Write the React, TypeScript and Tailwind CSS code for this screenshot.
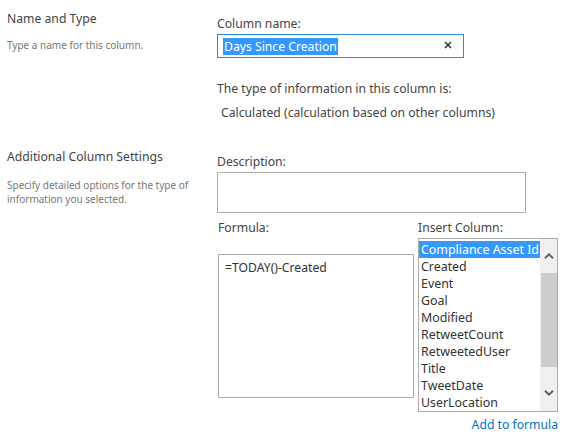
import React from "react";

const columns = [
  "Compliance Asset Id",
  "Created",
  "Event",
  "Goal",
  "Modified",
  "RetweetCount",
  "RetweetedUser",
  "Title",
  "TweetDate",
  "UserLocation",
];

function Chevron({ up }: { up?: boolean }) {
  return (
    <svg width="10" height="6" viewBox="0 0 10 6" className="block">
      <path
        d={up ? "M1 5.2 L5 1.4 L9 5.2" : "M1 0.8 L5 4.6 L9 0.8"}
        fill="none"
        stroke="#606060"
        strokeWidth="2"
      />
    </svg>
  );
}

export default function App() {
  return (
    <div
      className="w-[569px] h-[440px] bg-white text-[#444] overflow-hidden"
      style={{ fontFamily: '"Noto Sans", "Open Sans", sans-serif' }}
    >
      {/* Name and Type */}
      <div className="flex pt-[10px]">
        <div className="w-[217px] pl-[7px]">
          <h3 className="text-[12.2px] leading-[18px] text-[#444]">Name and Type</h3>
          <p className="mt-[10px] text-[10px] leading-[14px] text-[#777]">
            Type a name for this column.
          </p>
        </div>
        <div className="flex-1">
          <label className="block text-[12.2px] leading-[18px] mt-[5px]">Column name:</label>
          <div className="mt-[1px] w-[247px] h-[24px] border border-[#2a8dd4] flex items-center pl-[5px] pr-[11px]">
            <span className="bg-[#3399ff] text-white text-[12.2px] leading-[17px] px-[1px]">
              Days Since Creation
            </span>
            <span className="flex-1" />
            <svg width="8" height="8" viewBox="0 0 8 8" className="-mt-[2px]">
              <path d="M1 1 L7 7 M7 1 L1 7" stroke="#333" strokeWidth="1.6" />
            </svg>
          </div>
          <p className="mt-[22px] text-[12.2px] leading-[18px]">
            The type of information in this column is:
          </p>
          <p className="mt-[6px] pl-[4px] text-[12.2px] leading-[18px]">
            Calculated (calculation based on other columns)
          </p>
        </div>
      </div>

      {/* Additional Column Settings */}
      <div className="flex mt-[26px]">
        <div className="w-[217px] pl-[7px]">
          <h3 className="text-[12.2px] leading-[18px] text-[#444]">Additional Column Settings</h3>
          <p className="mt-[12px] w-[190px] text-[10px] leading-[14px] text-[#777]">
            Specify detailed options for the type of information you selected.
          </p>
        </div>
        <div className="flex-1">
          <label className="block text-[12.2px] leading-[18px] mt-[5px]">Description:</label>
          <div className="mt-[1px] w-[309px] h-[41px] border border-[#ababab]" />
          <div className="flex mt-[6px]">
            <div className="w-[201px]">
              <label className="block text-[12.2px] leading-[18px] pl-[1px]">Formula:</label>
              <div className="mt-[17px] ml-[1px] w-[196px] h-[144px] border border-[#ababab] px-[6px] pt-[4px] text-[12.2px] leading-[18px] text-[#333]">
                =TODAY()-Created
              </div>
            </div>
            <div>
              <label className="block text-[12.2px] leading-[18px]">Insert Column:</label>
              <div className="mt-[1px] w-[140px] h-[174px] border border-[#ababab] flex">
                <ul className="w-[121px] pt-[2px] text-[12.4px] leading-[17px] text-[#333] whitespace-nowrap overflow-hidden">
                  {columns.map((c, i) => (
                    <li
                      key={c}
                      className={
                        i === 0 ? "bg-[#3399ff] text-white pl-[2px]" : "pl-[2px]"
                      }
                    >
                      {c}
                    </li>
                  ))}
                </ul>
                <div className="flex-1 bg-[#f0f0f0] flex flex-col">
                  <div className="h-[34px] flex items-center justify-center">
                    <Chevron up />
                  </div>
                  <div className="h-[94px] ml-[1px] bg-[#cdcdcd]" />
                  <div className="flex-1 flex items-end justify-center pb-[15px]">
                    <Chevron />
                  </div>
                </div>
              </div>
              <div className="mt-[4px] w-[140px] text-right text-[12.2px] leading-[18px] text-[#0072c6]">
                Add to formula
              </div>
            </div>
          </div>
        </div>
      </div>
    </div>
  );
}
